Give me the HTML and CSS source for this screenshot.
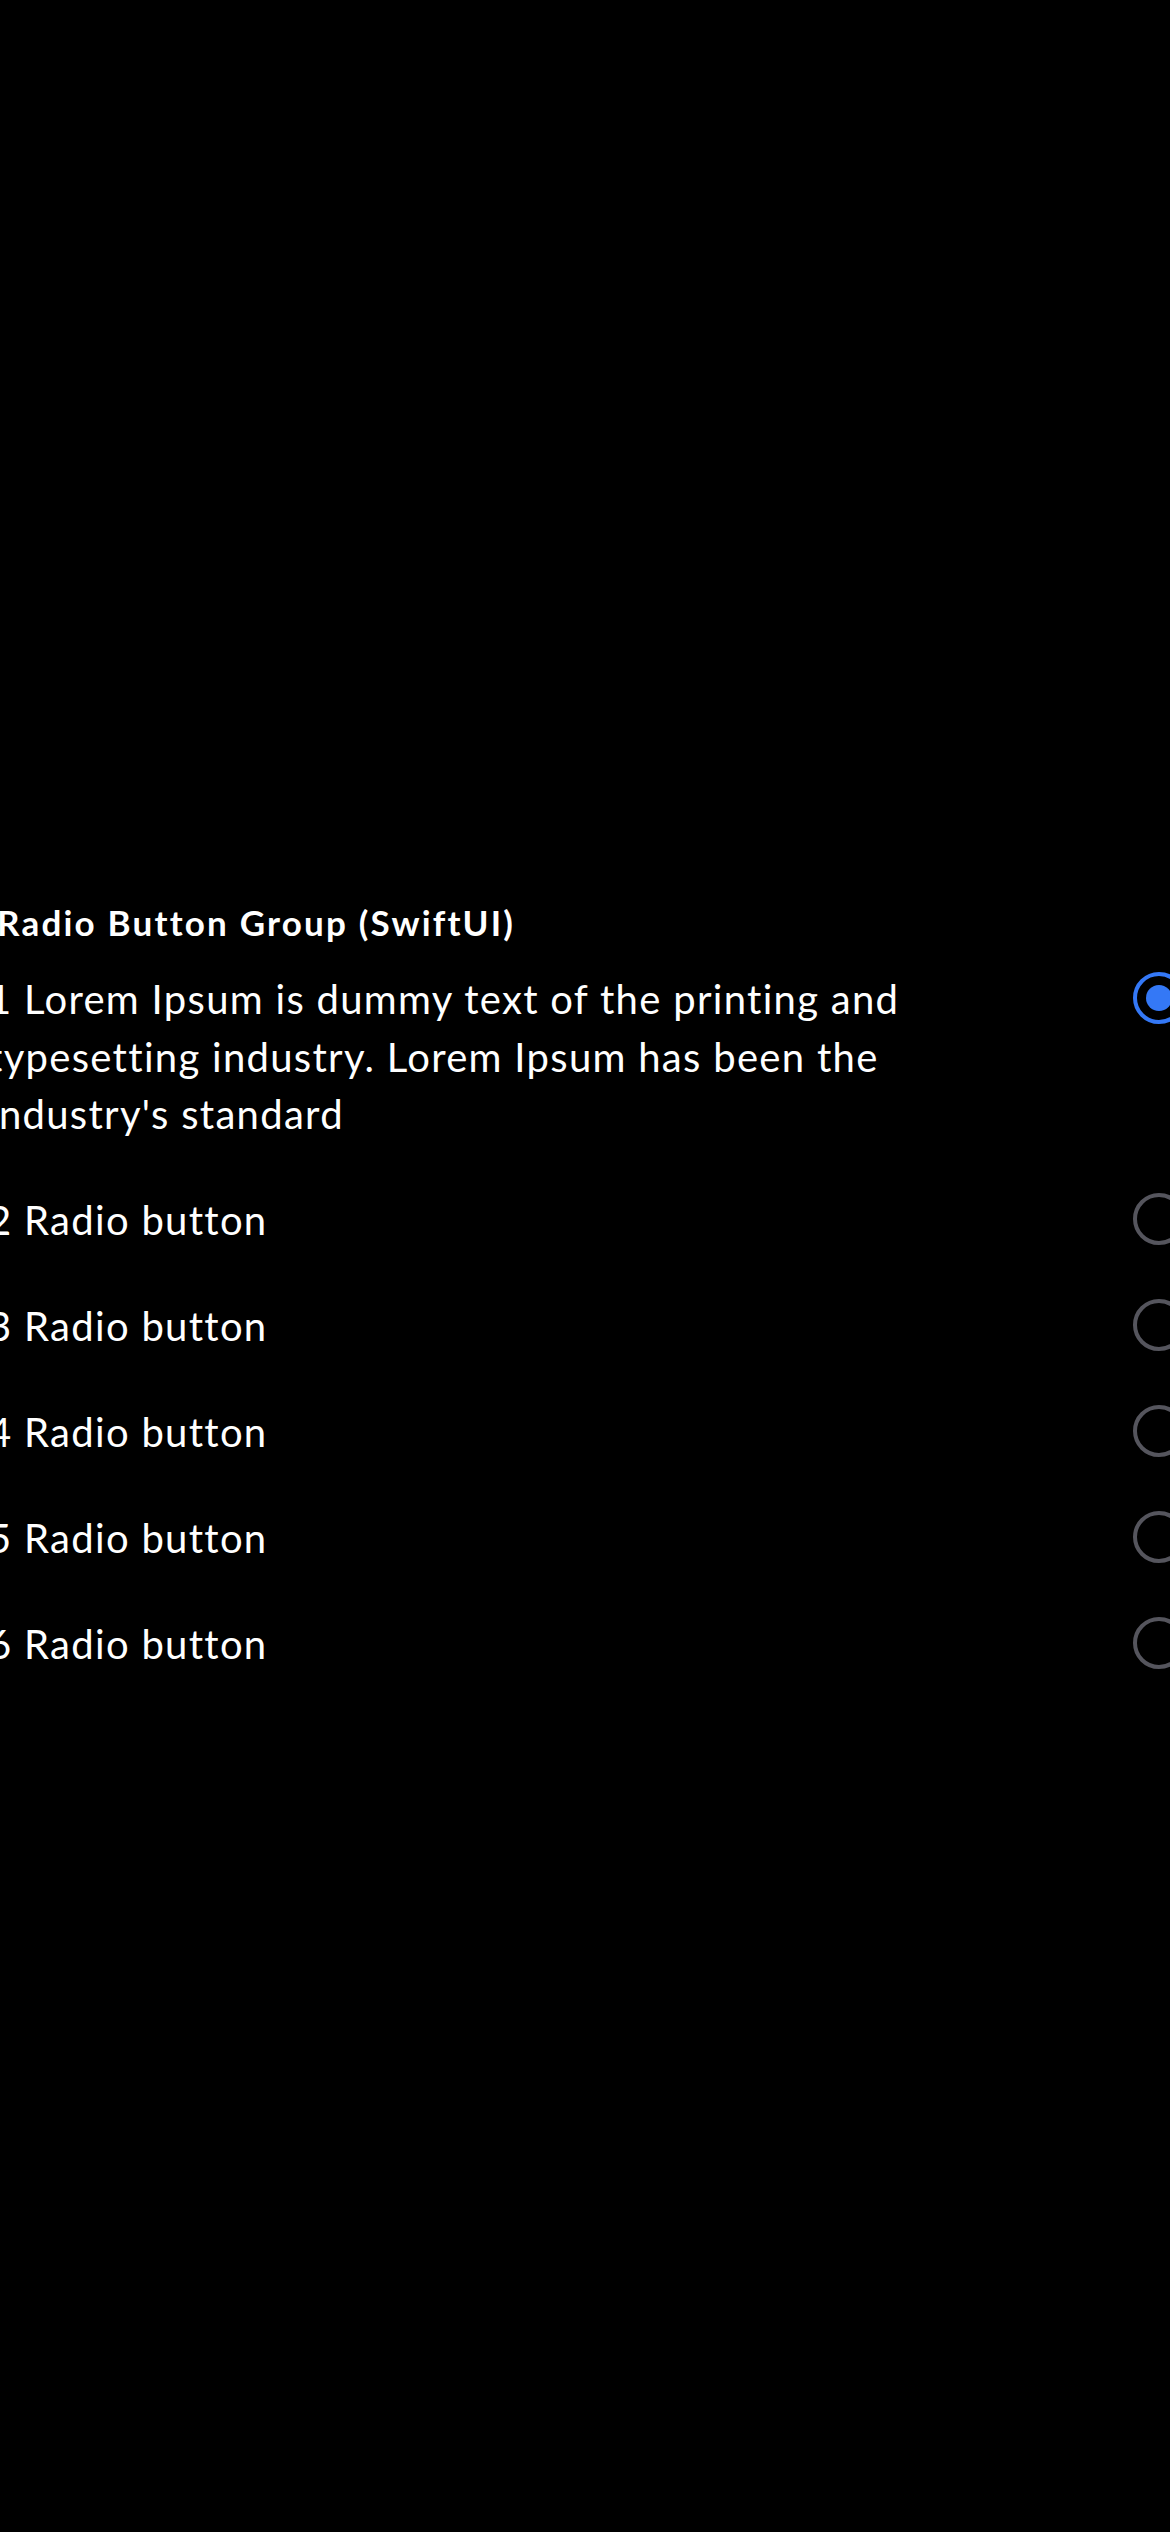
FILE: index.html
```html
<!DOCTYPE html>
<html lang="en">
<head>
<meta charset="utf-8">
<title>Radio Button Group (SwiftUI)</title>
<link rel="stylesheet" href="styles.css">
</head>
<body>
<main class="screen">
  <section class="group">
    <h1 class="title">Radio Button Group (SwiftUI)</h1>
    <ul class="options">
      <li class="option">
        <span class="label">1 Lorem Ipsum is dummy text of the printing and typesetting industry. Lorem Ipsum has been the industry's standard</span>
        <span class="radio radio--on"></span>
      </li>
      <li class="option">
        <span class="label">2 Radio button</span>
        <span class="radio"></span>
      </li>
      <li class="option">
        <span class="label">3 Radio button</span>
        <span class="radio"></span>
      </li>
      <li class="option">
        <span class="label">4 Radio button</span>
        <span class="radio"></span>
      </li>
      <li class="option">
        <span class="label">5 Radio button</span>
        <span class="radio"></span>
      </li>
      <li class="option">
        <span class="label">6 Radio button</span>
        <span class="radio"></span>
      </li>
    </ul>
  </section>
</main>
</body>
</html>
```

FILE: styles.css
```css
html, body {
  margin: 0;
  padding: 0;
  background: #000;
}

body {
  width: 1170px;
  height: 2532px;
  overflow: hidden;
  color: #fff;
  font-family: "Lato", "Noto Sans", "Liberation Sans", sans-serif;
}

.screen {
  width: 1170px;
  height: 2532px;
  overflow: hidden;
  padding-top: 898px;
  box-sizing: border-box;
}

.group {
  margin-left: -12px;
  width: 1197px;
}

.title {
  margin: 0 0 23px 9px;
  font-size: 35px;
  line-height: 48px;
  font-weight: 700;
  letter-spacing: 2.2px;
}

.options {
  list-style: none;
  margin: 0;
  padding: 0;
  display: flex;
  flex-direction: column;
  gap: 46.5px;
}

.option {
  display: flex;
  align-items: flex-start;
  justify-content: space-between;
}

.label {
  max-width: 990px;
  padding-top: 2px;
  font-size: 40px;
  line-height: 57.5px;
  font-weight: 400;
  letter-spacing: 1.3px;
}

.radio {
  flex: none;
  width: 52px;
  height: 52px;
  margin-top: 2.75px;
  box-sizing: border-box;
  border-radius: 50%;
  border: 4.5px solid #55555d;
  display: flex;
  align-items: center;
  justify-content: center;
}

.radio--on {
  border-color: #3478f6;
}

.radio--on::after {
  content: "";
  width: 26px;
  height: 26px;
  border-radius: 50%;
  background: #3478f6;
}
```
